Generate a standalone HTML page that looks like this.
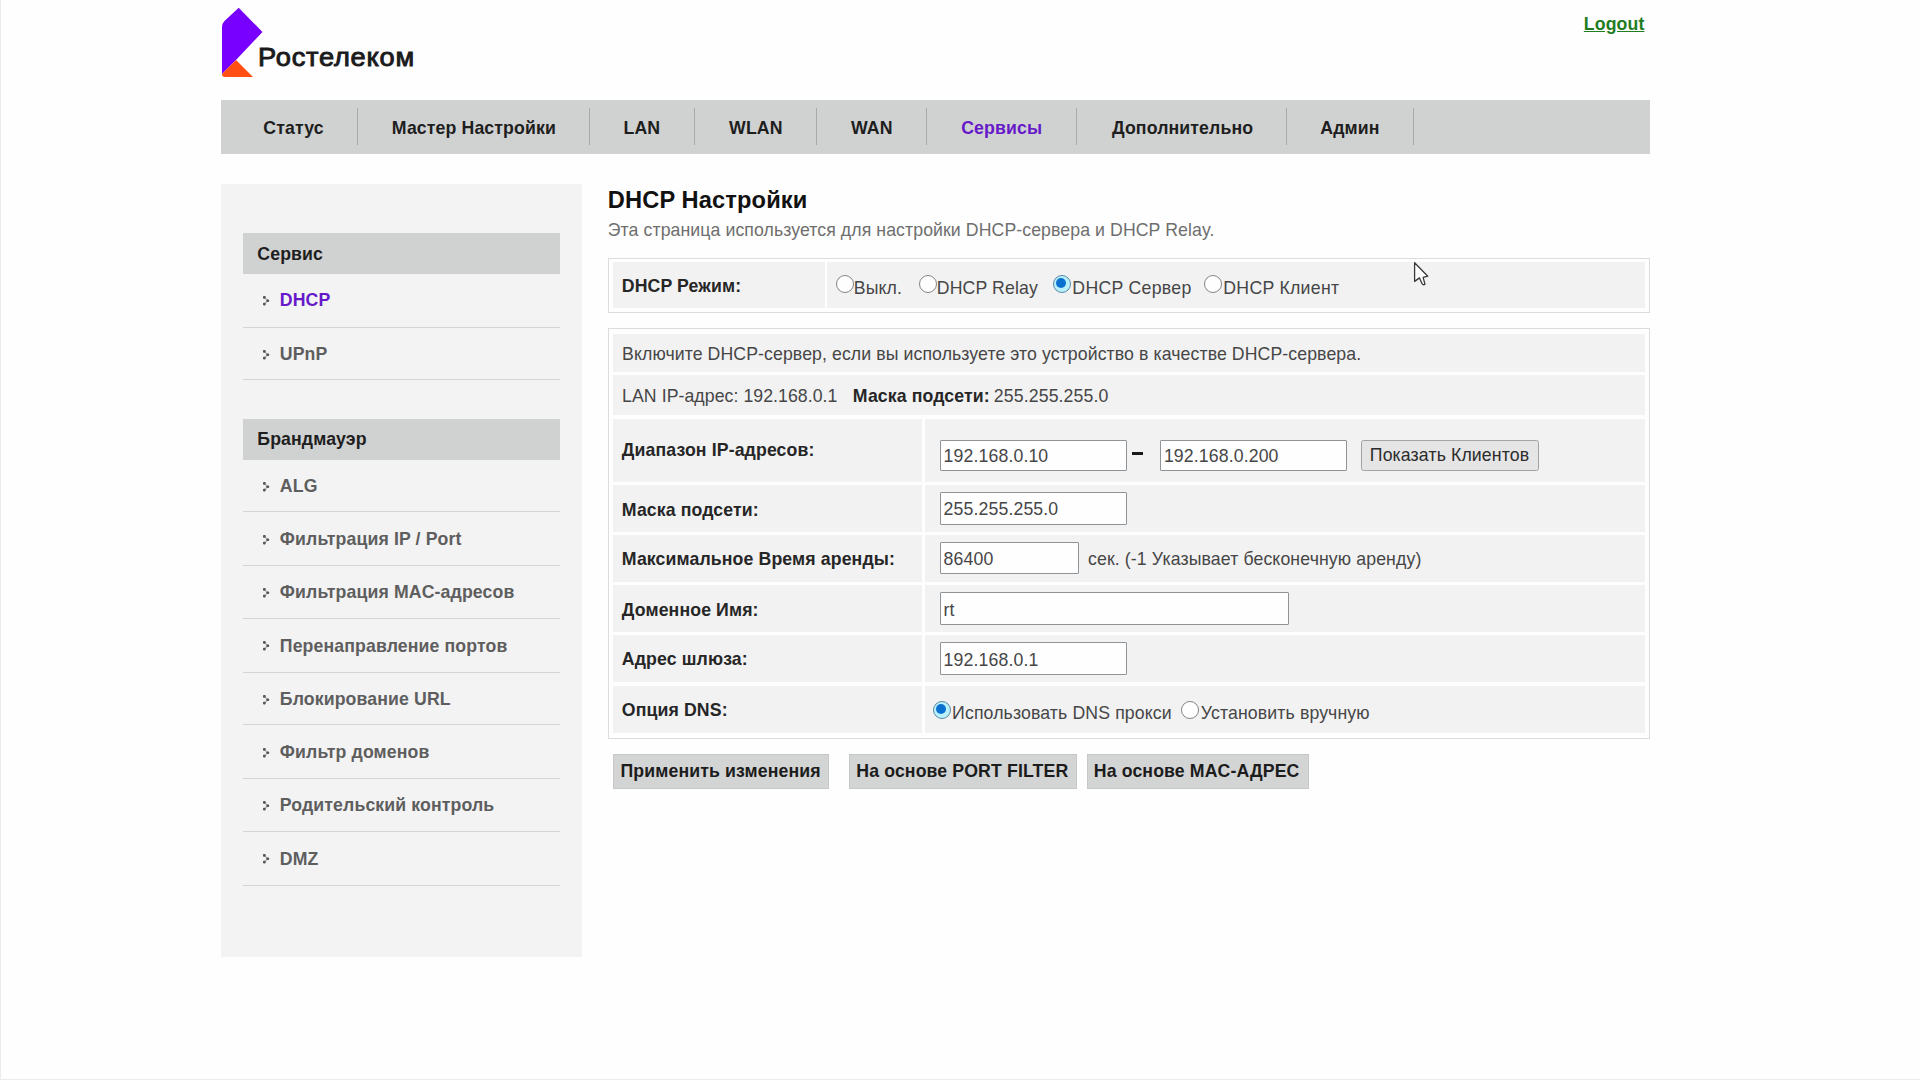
<!DOCTYPE html>
<html><head><meta charset="utf-8">
<style>
html,body{margin:0;padding:0;width:1920px;height:1080px;overflow:hidden;background:#fefefe;}
body{position:relative;font-family:"Liberation Sans",sans-serif;font-size:17.7px;color:#464646;}
.a{position:absolute;}
.t{position:absolute;white-space:pre;line-height:0;letter-spacing:0.12px;margin-left:-1.2px;}
.b{font-weight:bold;}
.nav{left:221px;top:100px;width:1428.5px;height:54px;background:#d0d1d1;}
.ns{position:absolute;top:108px;width:1px;height:37px;background:#a8a9a9;}
.nt{color:#1e1e1e;font-weight:bold;}
.side{left:221px;top:184px;width:360.6px;height:773px;background:#f3f3f4;}
.sh{left:243px;width:317px;height:41px;background:#d0d1d1;}
.sep{position:absolute;left:243px;width:317px;height:1px;background:#d4d4d5;}
.si{color:#5e5e5e;font-weight:bold;}
.chev{position:absolute;left:262px;width:8px;height:10px;}
.box{position:absolute;left:608px;width:1042px;border:1.5px solid #dcdcdc;box-sizing:border-box;background:#fefefe;}
.cell{position:absolute;background:#f2f2f3;}
.inp{position:absolute;box-sizing:border-box;border:1px solid #8f9499;background:#fefefe;border-radius:1px;}
.rad{position:absolute;box-sizing:border-box;width:18px;height:18px;border-radius:50%;border:1.8px solid #858585;background:#fefefe;}
.rads{border-color:#5a87a6;background:#b9f1fa;}
.rads::after{content:"";position:absolute;left:2.2px;top:2.2px;width:10px;height:10px;border-radius:50%;background:#0b70cf;}
.btn{position:absolute;box-sizing:border-box;background:#d3d4d4;border:1px solid #c6c7c7;height:35px;top:754px;}
</style></head><body>

<!-- logo -->
<svg class="a" style="left:0;top:0" width="300" height="90" viewBox="0 0 300 90">
  <path d="M238.7 7.8 L262.5 32 L236 60 L222 74 L222 27 Q222 23.5 224.5 21 Z" fill="#7700ff"/>
  <path d="M236 60 L253 77 L225 77 Q222 77 222 74 Z" fill="#ff4f12"/>
</svg>
<div class="t" style="left:259px;top:57px;font-size:25.2px;color:#1a1a1c;-webkit-text-stroke:0.9px #1a1a1c;letter-spacing:0.72px;transform:scaleX(1.08);transform-origin:0 0">Ростелеком</div>

<div class="t b" style="left:1585px;top:23.5px;color:#1f7d1f;text-decoration:underline">Logout</div>

<!-- nav -->
<div class="a nav"></div>
<div class="ns" style="left:357px"></div>
<div class="ns" style="left:589px"></div>
<div class="ns" style="left:694px"></div>
<div class="ns" style="left:816px"></div>
<div class="ns" style="left:926px"></div>
<div class="ns" style="left:1076px"></div>
<div class="ns" style="left:1286px"></div>
<div class="ns" style="left:1413px"></div>
<div class="t nt" style="left:264.5px;top:127.6px">Статус</div>
<div class="t nt" style="left:393px;top:127.6px">Мастер Настройки</div>
<div class="t nt" style="left:624.7px;top:127.6px">LAN</div>
<div class="t nt" style="left:730.3px;top:127.6px">WLAN</div>
<div class="t nt" style="left:852.2px;top:127.6px">WAN</div>
<div class="t nt" style="left:962.4px;top:127.6px;color:#6619c8">Сервисы</div>
<div class="t nt" style="left:1113.2px;top:127.6px">Дополнительно</div>
<div class="t nt" style="left:1321.5px;top:127.6px">Админ</div>

<!-- sidebar -->
<div class="a side"></div>
<div class="a sh" style="top:233px"></div>
<div class="t b" style="left:258.5px;top:253.5px;color:#1e1e1e">Сервис</div>
<div class="sep" style="top:327px"></div>
<div class="sep" style="top:379px"></div>
<div class="a sh" style="top:418.5px"></div>
<div class="t b" style="left:258.5px;top:438.5px;color:#1e1e1e">Брандмауэр</div>
<div class="sep" style="top:511px"></div>
<div class="sep" style="top:565px"></div>
<div class="sep" style="top:618px"></div>
<div class="sep" style="top:672px"></div>
<div class="sep" style="top:724px"></div>
<div class="sep" style="top:778px"></div>
<div class="sep" style="top:831px"></div>
<div class="sep" style="top:885px"></div>
<svg class="chev" style="top:295.6px" viewBox="0 0 8 10"><path d="M2.3 1.3 L5.7 4.7 L2.3 8" fill="none" stroke="#555" stroke-opacity="0.35" stroke-width="1.6"/><rect x="1" y="0" width="2.7" height="2.7" rx="0.8" fill="#555"/><rect x="4.4" y="3.4" width="2.7" height="2.7" rx="0.8" fill="#555"/><rect x="1" y="6.7" width="2.7" height="2.7" rx="0.8" fill="#555"/></svg>
<div class="t si" style="left:281px;top:299.97px;color:#6619c8">DHCP</div>
<svg class="chev" style="top:349.6px" viewBox="0 0 8 10"><path d="M2.3 1.3 L5.7 4.7 L2.3 8" fill="none" stroke="#555" stroke-opacity="0.35" stroke-width="1.6"/><rect x="1" y="0" width="2.7" height="2.7" rx="0.8" fill="#555"/><rect x="4.4" y="3.4" width="2.7" height="2.7" rx="0.8" fill="#555"/><rect x="1" y="6.7" width="2.7" height="2.7" rx="0.8" fill="#555"/></svg>
<div class="t si" style="left:281px;top:353.97px;">UPnP</div>
<svg class="chev" style="top:481.8px" viewBox="0 0 8 10"><path d="M2.3 1.3 L5.7 4.7 L2.3 8" fill="none" stroke="#555" stroke-opacity="0.35" stroke-width="1.6"/><rect x="1" y="0" width="2.7" height="2.7" rx="0.8" fill="#555"/><rect x="4.4" y="3.4" width="2.7" height="2.7" rx="0.8" fill="#555"/><rect x="1" y="6.7" width="2.7" height="2.7" rx="0.8" fill="#555"/></svg>
<div class="t si" style="left:281px;top:486.12px;">ALG</div>
<svg class="chev" style="top:534.5px" viewBox="0 0 8 10"><path d="M2.3 1.3 L5.7 4.7 L2.3 8" fill="none" stroke="#555" stroke-opacity="0.35" stroke-width="1.6"/><rect x="1" y="0" width="2.7" height="2.7" rx="0.8" fill="#555"/><rect x="4.4" y="3.4" width="2.7" height="2.7" rx="0.8" fill="#555"/><rect x="1" y="6.7" width="2.7" height="2.7" rx="0.8" fill="#555"/></svg>
<div class="t si" style="left:281px;top:538.87px;">Фильтрация IP / Port</div>
<svg class="chev" style="top:588.0px" viewBox="0 0 8 10"><path d="M2.3 1.3 L5.7 4.7 L2.3 8" fill="none" stroke="#555" stroke-opacity="0.35" stroke-width="1.6"/><rect x="1" y="0" width="2.7" height="2.7" rx="0.8" fill="#555"/><rect x="4.4" y="3.4" width="2.7" height="2.7" rx="0.8" fill="#555"/><rect x="1" y="6.7" width="2.7" height="2.7" rx="0.8" fill="#555"/></svg>
<div class="t si" style="left:281px;top:592.37px;">Фильтрация MAC-адресов</div>
<svg class="chev" style="top:641.2px" viewBox="0 0 8 10"><path d="M2.3 1.3 L5.7 4.7 L2.3 8" fill="none" stroke="#555" stroke-opacity="0.35" stroke-width="1.6"/><rect x="1" y="0" width="2.7" height="2.7" rx="0.8" fill="#555"/><rect x="4.4" y="3.4" width="2.7" height="2.7" rx="0.8" fill="#555"/><rect x="1" y="6.7" width="2.7" height="2.7" rx="0.8" fill="#555"/></svg>
<div class="t si" style="left:281px;top:645.62px;">Перенаправление портов</div>
<svg class="chev" style="top:694.7px" viewBox="0 0 8 10"><path d="M2.3 1.3 L5.7 4.7 L2.3 8" fill="none" stroke="#555" stroke-opacity="0.35" stroke-width="1.6"/><rect x="1" y="0" width="2.7" height="2.7" rx="0.8" fill="#555"/><rect x="4.4" y="3.4" width="2.7" height="2.7" rx="0.8" fill="#555"/><rect x="1" y="6.7" width="2.7" height="2.7" rx="0.8" fill="#555"/></svg>
<div class="t si" style="left:281px;top:699.07px;">Блокирование URL</div>
<svg class="chev" style="top:747.5px" viewBox="0 0 8 10"><path d="M2.3 1.3 L5.7 4.7 L2.3 8" fill="none" stroke="#555" stroke-opacity="0.35" stroke-width="1.6"/><rect x="1" y="0" width="2.7" height="2.7" rx="0.8" fill="#555"/><rect x="4.4" y="3.4" width="2.7" height="2.7" rx="0.8" fill="#555"/><rect x="1" y="6.7" width="2.7" height="2.7" rx="0.8" fill="#555"/></svg>
<div class="t si" style="left:281px;top:751.87px;">Фильтр доменов</div>
<svg class="chev" style="top:800.8px" viewBox="0 0 8 10"><path d="M2.3 1.3 L5.7 4.7 L2.3 8" fill="none" stroke="#555" stroke-opacity="0.35" stroke-width="1.6"/><rect x="1" y="0" width="2.7" height="2.7" rx="0.8" fill="#555"/><rect x="4.4" y="3.4" width="2.7" height="2.7" rx="0.8" fill="#555"/><rect x="1" y="6.7" width="2.7" height="2.7" rx="0.8" fill="#555"/></svg>
<div class="t si" style="left:281px;top:805.17px;">Родительский контроль</div>
<svg class="chev" style="top:854.4px" viewBox="0 0 8 10"><path d="M2.3 1.3 L5.7 4.7 L2.3 8" fill="none" stroke="#555" stroke-opacity="0.35" stroke-width="1.6"/><rect x="1" y="0" width="2.7" height="2.7" rx="0.8" fill="#555"/><rect x="4.4" y="3.4" width="2.7" height="2.7" rx="0.8" fill="#555"/><rect x="1" y="6.7" width="2.7" height="2.7" rx="0.8" fill="#555"/></svg>
<div class="t si" style="left:281px;top:858.77px;">DMZ</div>


<!-- content -->
<div class="t b" style="left:609px;top:200.20px;font-size:23.66px;color:#111">DHCP Настройки</div>
<div class="t" style="left:609px;top:230.17px;color:#6e6e6e;letter-spacing:0.085px">Эта страница используется для настройки DHCP-сервера и DHCP Relay.</div>
<div class="box" style="top:257.5px;height:55.5px"></div>
<div class="cell" style="left:613px;top:262px;width:211.5px;height:46px"></div>
<div class="cell" style="left:827px;top:262px;width:817.6px;height:46px"></div>
<div class="t b" style="left:623px;top:285.87px;color:#262626">DHCP Режим:</div>
<div class="rad" style="left:836.2px;top:275px"></div>
<div class="t " style="left:855px;top:287.67px;">Выкл.</div>
<div class="rad" style="left:918.5px;top:275px"></div>
<div class="t " style="left:938px;top:287.67px;">DHCP Relay</div>
<div class="rad rads" style="left:1053.1px;top:275px"></div>
<div class="t " style="left:1073.5px;top:287.67px;letter-spacing:0.3px">DHCP Сервер</div>
<div class="rad" style="left:1204.3px;top:275px"></div>
<div class="t " style="left:1224.5px;top:287.67px;letter-spacing:0.28px">DHCP Клиент</div>
<div class="box" style="top:327.5px;height:411px"></div>
<div class="cell" style="left:613px;top:334px;width:1031.6px;height:38.0px"></div>
<div class="cell" style="left:613px;top:375.4px;width:1031.6px;height:40.1px"></div>
<div class="cell" style="left:613px;top:418.7px;width:309.3px;height:63.3px"></div>
<div class="cell" style="left:925.3px;top:418.7px;width:719.3px;height:63.3px"></div>
<div class="cell" style="left:613px;top:485px;width:309.3px;height:46.6px"></div>
<div class="cell" style="left:925.3px;top:485px;width:719.3px;height:46.6px"></div>
<div class="cell" style="left:613px;top:535px;width:309.3px;height:46.7px"></div>
<div class="cell" style="left:925.3px;top:535px;width:719.3px;height:46.7px"></div>
<div class="cell" style="left:613px;top:585px;width:309.3px;height:47.0px"></div>
<div class="cell" style="left:925.3px;top:585px;width:719.3px;height:47.0px"></div>
<div class="cell" style="left:613px;top:635px;width:309.3px;height:47.0px"></div>
<div class="cell" style="left:925.3px;top:635px;width:719.3px;height:47.0px"></div>
<div class="cell" style="left:613px;top:686px;width:309.3px;height:47.3px"></div>
<div class="cell" style="left:925.3px;top:686px;width:719.3px;height:47.3px"></div>
<div class="t " style="left:623.3px;top:354.07px;letter-spacing:0.09px">Включите DHCP-сервер, если вы используете это устройство в качестве DHCP-сервера.</div>
<div class="t " style="left:623.3px;top:395.67px;letter-spacing:0.06px">LAN IP-адрес: 192.168.0.1</div>
<div class="t b" style="left:854px;top:395.67px;color:#262626">Маска подсети:</div>
<div class="t " style="left:995px;top:395.67px;">255.255.255.0</div>
<div class="t b" style="left:623px;top:450.37px;color:#262626">Диапазон IP-адресов:</div>
<div class="t b" style="left:623px;top:509.67px;color:#262626">Маска подсети:</div>
<div class="t b" style="left:623px;top:559.27px;color:#262626">Максимальное Время аренды:</div>
<div class="t b" style="left:623px;top:610.37px;color:#262626">Доменное Имя:</div>
<div class="t b" style="left:623px;top:659.27px;color:#262626">Адрес шлюза:</div>
<div class="t b" style="left:623px;top:710.17px;color:#262626">Опция DNS:</div>
<div class="inp" style="left:940px;top:440px;width:187px;height:31.2px"></div>
<div class="t " style="left:944.8px;top:456.07px;">192.168.0.10</div>
<div class="a" style="left:1132px;top:452.3px;width:10.5px;height:2.6px;background:#1a1a1a"></div>
<div class="inp" style="left:1160px;top:440px;width:187px;height:31.2px"></div>
<div class="t " style="left:1165.1000000000001px;top:456.07px;">192.168.0.200</div>
<div class="a" style="left:1361px;top:440px;width:177.6px;height:31.4px;box-sizing:border-box;border:1px solid #a3a3a3;border-radius:2.5px;background:#e5e5e5"></div>
<div class="t " style="left:1371px;top:455.47px;color:#2c2c2c">Показать Клиентов</div>
<div class="inp" style="left:940px;top:492px;width:187px;height:33.2px"></div>
<div class="t " style="left:944.8px;top:509.37px;">255.255.255.0</div>
<div class="inp" style="left:940px;top:542px;width:139px;height:32.2px"></div>
<div class="t " style="left:944.8px;top:559.37px;">86400</div>
<div class="t " style="left:1089.2px;top:558.87px;">сек. (-1 Указывает бесконечную аренду)</div>
<div class="inp" style="left:940px;top:592px;width:349px;height:33.2px"></div>
<div class="t " style="left:944.8px;top:610.27px;">rt</div>
<div class="inp" style="left:940px;top:642px;width:187px;height:33.2px"></div>
<div class="t " style="left:944.8px;top:660.27px;">192.168.0.1</div>
<div class="rad rads" style="left:933px;top:700.8px"></div>
<div class="t " style="left:953.3px;top:712.87px;">Использовать DNS прокси</div>
<div class="rad" style="left:1181.2px;top:700.8px"></div>
<div class="t " style="left:1202px;top:712.87px;">Установить вручную</div>
<div class="btn" style="left:613.3px;width:215.9px"></div>
<div class="t b" style="left:621.7px;top:771.47px;color:#1c1c1c">Применить изменения</div>
<div class="btn" style="left:849px;width:228.0px"></div>
<div class="t b" style="left:857.5px;top:771.47px;color:#1c1c1c">На основе PORT FILTER</div>
<div class="btn" style="left:1086.7px;width:222.5px"></div>
<div class="t b" style="left:1095px;top:771.47px;color:#1c1c1c">На основе MAC-АДРЕС</div>
<svg class="a" style="left:1413px;top:262px" width="18" height="26" viewBox="0 0 18 26"><path d="M1.6 0.8 L1.6 19.4 L6.5 15.9 L9.2 21.9 Q10.3 23.3 12 22.3 L10.1 15.4 L14.8 14.2 Z" fill="#fff" stroke="#3a3a3a" stroke-width="1.3" stroke-linejoin="round"/></svg>
<div class="a" style="left:0;top:0;width:1px;height:1080px;background:#ebebea"></div>
<div class="a" style="left:0;top:1079px;width:1920px;height:1px;background:#ebebea"></div>


</body></html>
